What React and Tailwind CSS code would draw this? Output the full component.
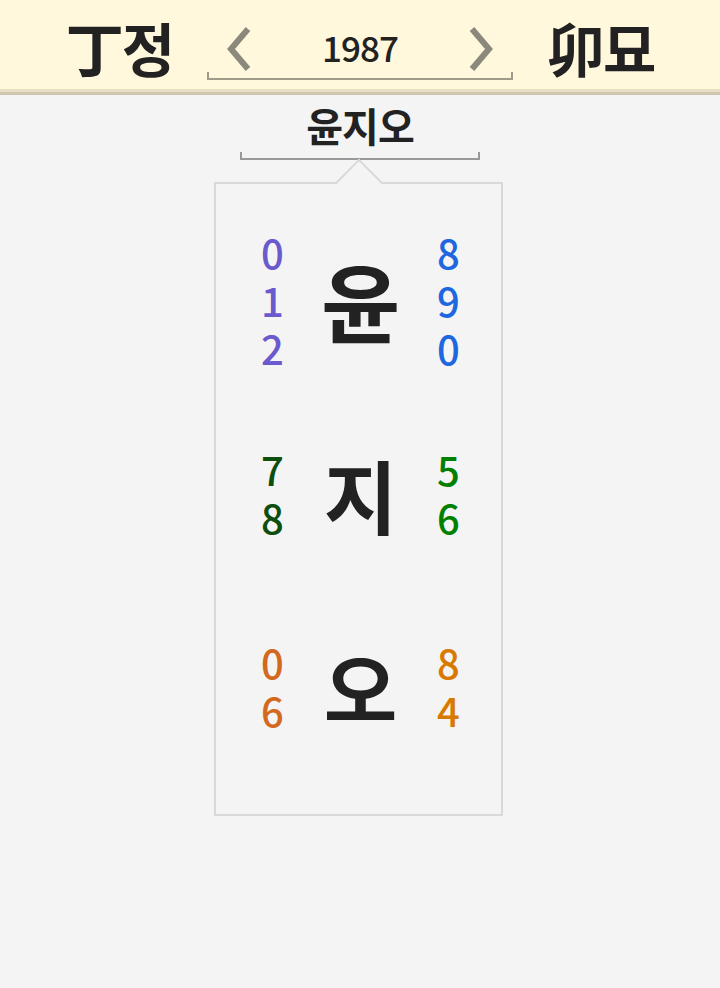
import React from "react";

const KR = { fontFamily: '"Noto Sans CJK KR", "Noto Sans", sans-serif' };

function Chevron({ dir }) {
  return (
    <svg width="26" height="46" viewBox="0 0 26 46" className="shrink-0">
      {dir === "left" ? (
        <polyline points="22,3 5,23 22,43" fill="none" stroke="#8a897c" strokeWidth="6" />
      ) : (
        <polyline points="4,3 21,23 4,43" fill="none" stroke="#8a897c" strokeWidth="6" />
      )}
    </svg>
  );
}

function Digits({ items, color }) {
  return (
    <div className="w-[40px] flex flex-col items-center" style={KR}>
      {items.map((d, i) => (
        <div key={i} className={`text-[40px] leading-[48px] font-medium ${color}`}>
          {d}
        </div>
      ))}
    </div>
  );
}

function Row({ left, right, ch, lc, rc, size }) {
  return (
    <div className="h-[193px] flex items-center justify-center gap-[18px]">
      <Digits items={left} color={lc} />
      <div className={`w-[100px] text-center ${size} leading-none font-bold text-[#222]`} style={KR}>
        {ch}
      </div>
      <Digits items={right} color={rc} />
    </div>
  );
}

export default function App() {
  return (
    <div className="min-h-screen bg-[#f4f4f4]" style={KR}>
      <header className="h-[89px] bg-[#fff8dc] flex items-center justify-center gap-[34px]">
        <div className="text-[58px] font-bold text-[#222] leading-none tracking-[-2px] pt-[4px]">丁정</div>
        <div className="w-[306px] flex flex-col pt-[16px]">
          <div className="flex items-center justify-between px-[19px] h-[46px]">
            <Chevron dir="left" />
            <div className="text-[35px] leading-none text-[#222] tracking-[-1px] font-medium mb-[5px]">1987</div>
            <Chevron dir="right" />
          </div>
          <div className="h-[8px] border-x-2 border-b-2 border-[#a09a88]" />
        </div>
        <div className="text-[58px] font-bold text-[#222] leading-none tracking-[-2px] pt-[4px]">卯묘</div>
      </header>
      <div className="h-[3px] bg-[#e8e0c5]" />
      <div className="h-[3px] bg-[#cec6ae]" />

      <div className="flex flex-col items-center">
        <div className="mt-[4px] text-[40px] font-bold leading-[53px] text-[#222] tracking-[-1px]">윤지오</div>
        <div className="w-[240px] h-[8px] border-x-2 border-b-2 border-[#999999]" />
        <div className="relative mt-[22px] mr-[3px] w-[289px] h-[634px] border-2 border-[#d9d9d9] pt-[19px] pl-[4px]">
          <div className="absolute left-1/2 top-[-2px] w-[33px] h-[33px] -translate-x-1/2 -translate-y-1/2 rotate-45 bg-[#f4f4f4] border-t-2 border-l-2 border-[#d9d9d9]" />
          <Row ch="윤" size="text-[86px]" left={["0", "1", "2"]} right={["8", "9", "0"]} lc="text-[#6a5acd]" rc="text-[#1f67e0]" />
          <Row ch="지" size="text-[80px]" left={["7", "8"]} right={["5", "6"]} lc="text-[#0d4d0d]" rc="text-[#008000]" />
          <Row ch="오" size="text-[80px]" left={["0", "6"]} right={["8", "4"]} lc="text-[#d2691e]" rc="text-[#d97a00]" />
        </div>
      </div>
    </div>
  );
}
